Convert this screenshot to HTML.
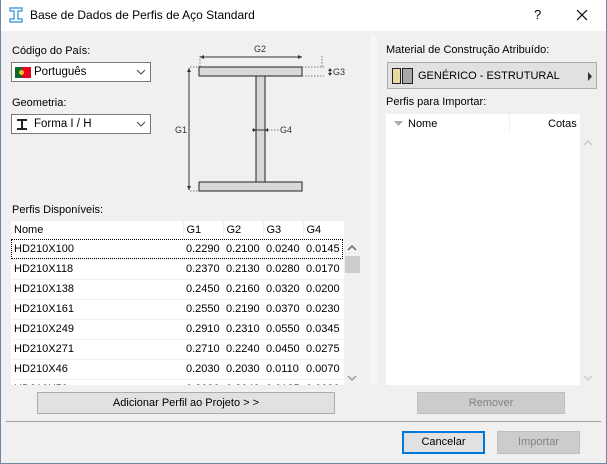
<!DOCTYPE html>
<html><head><meta charset="utf-8"><style>
*{margin:0;padding:0;box-sizing:border-box}
body{width:607px;height:464px;overflow:hidden;background:#f0f0f0;font-family:"Liberation Sans",sans-serif;font-size:11px;color:#000;position:relative}
.a{position:absolute}
.win{position:absolute;left:0;top:0;width:607px;height:464px;border:1px solid #6f86a5;border-top:none}
.dd{position:absolute;background:#fff;border:1px solid #7a7a7a;height:20px}
.btn{position:absolute;background:#e1e1e1;border:1px solid #adadad;text-align:center;font-size:11px}
.dis{background:#cccccc;border-color:#bfbfbf;color:#838383}
table{border-collapse:collapse;font-size:11px}
td{height:20px;padding:0 0 0 3px;white-space:nowrap;border-bottom:1px solid #f0f0f0}
</style></head><body>
<div class="a" style="left:0;top:0;width:607px;height:31px;background:#fff"></div>
<svg class="a" style="left:9px;top:7px" width="14" height="16" viewBox="0 0 14 16"><path d="M1 1h12v3H9v8h4v3H1v-3h4V4H1z" fill="none" stroke="#4aa3df" stroke-width="1.4"/></svg>
<div class="a" style="left:30px;top:8px;font-size:12px">Base de Dados de Perfis de Aço Standard</div>
<div class="a" style="left:534px;top:7px;font-size:13px">?</div>
<svg class="a" style="left:576px;top:9px" width="12" height="12"><path d="M1 1L11 11M11 1L1 11" stroke="#000" stroke-width="1.2"/></svg>

<div class="a" style="left:370px;top:35px;width:7px;height:350px;background:#f6f6f6"></div>

<div class="a" style="left:12px;top:45px">Código do País:</div>
<div class="dd" style="left:11px;top:62px;width:140px">
 <div class="a" style="left:3px;top:4px;width:16px;height:11px;background:#e8001c"><div style="width:7px;height:11px;background:#0a6a2a"></div><div class="a" style="left:4px;top:3px;width:5px;height:5px;border-radius:50%;background:#e9c42a"></div></div>
 <div class="a" style="left:22px;top:3px;font-size:11.5px">Português</div>
 <svg class="a" style="left:124px;top:6px" width="10" height="7"><path d="M1 1l4 4 4-4" fill="none" stroke="#444"/></svg>
</div>
<div class="a" style="left:12px;top:97px">Geometria:</div>
<div class="dd" style="left:11px;top:114px;width:140px">
 <svg class="a" style="left:4px;top:4px" width="12" height="11"><path d="M1 1h10M1 10h10M6 1v9" stroke="#222" stroke-width="2"/></svg>
 <div class="a" style="left:22px;top:3px;font-size:11.5px">Forma I / H</div>
 <svg class="a" style="left:124px;top:6px" width="10" height="7"><path d="M1 1l4 4 4-4" fill="none" stroke="#444"/></svg>
</div>

<svg class="a" style="left:170px;top:44px;overflow:visible" width="190" height="150" font-family="Liberation Sans" font-size="9" fill="#333">
<g transform="translate(10,0)">
<path d="M19 23h103v9H19zM76 32h9v106h-9zM19 138h103v9H19z" fill="#d8d8d8" stroke="#222" stroke-width="1"/>
<path d="M20 12v11M142 12v11M122 23h22M122 32h22M10 23h9M10 147h9M85 86h14" stroke="#777" stroke-dasharray="1.5,1.5" fill="none"/>
<path d="M20 13h102M9 24v122M150 25v6M72 86h13" stroke="#333" fill="none"/>
<path d="M20 13l4-2v4zM122 13l-4-2v4zM9 24l-2 4h4zM9 146l-2-4h4zM150 24l-2 3h4zM150 32l-2-3h4zM76 86l-3-2v4zM85 86l3-2v4z" fill="#333"/>
<text x="74" y="8">G2</text><text x="153" y="31">G3</text><text x="-5" y="89">G1</text><text x="100" y="89">G4</text>
</g>
</svg>

<div class="a" style="left:12px;top:204px">Perfis Disponíveis:</div>
<div class="a" style="left:11px;top:221px;width:333px;height:164px;background:#fff;overflow:hidden">
<table>
<tr><td style="width:172px;border-right:1px solid #f0f0f0;height:18px;border-bottom:none">Nome</td><td style="width:40px;border-right:1px solid #f0f0f0;border-bottom:none;height:18px">G1</td><td style="width:40px;border-right:1px solid #f0f0f0;border-bottom:none;height:18px">G2</td><td style="width:40px;border-right:1px solid #f0f0f0;border-bottom:none;height:18px">G3</td><td style="width:40px;border-bottom:none;height:18px">G4</td></tr>
<tr style="outline:1px dotted #000;outline-offset:-1px"><td>HD210X100</td><td>0.2290</td><td>0.2100</td><td>0.0240</td><td>0.0145</td></tr>
<tr><td>HD210X118</td><td>0.2370</td><td>0.2130</td><td>0.0280</td><td>0.0170</td></tr>
<tr><td>HD210X138</td><td>0.2450</td><td>0.2160</td><td>0.0320</td><td>0.0200</td></tr>
<tr><td>HD210X161</td><td>0.2550</td><td>0.2190</td><td>0.0370</td><td>0.0230</td></tr>
<tr><td>HD210X249</td><td>0.2910</td><td>0.2310</td><td>0.0550</td><td>0.0345</td></tr>
<tr><td>HD210X271</td><td>0.2710</td><td>0.2240</td><td>0.0450</td><td>0.0275</td></tr>
<tr><td>HD210X46</td><td>0.2030</td><td>0.2030</td><td>0.0110</td><td>0.0070</td></tr>
<tr><td>HD210X59</td><td>0.2090</td><td>0.2040</td><td>0.0135</td><td>0.0090</td></tr>
</table></div>
<svg class="a" style="left:346px;top:244px" width="12" height="8"><path d="M2 6l4-4 4 4" fill="none" stroke="#666" stroke-width="1.5"/></svg>
<div class="a" style="left:345px;top:256px;width:15px;height:17px;background:#cdcdcd"></div>
<svg class="a" style="left:346px;top:374px" width="12" height="8"><path d="M2 2l4 4 4-4" fill="none" stroke="#999" stroke-width="1.5"/></svg>
<div class="btn" style="left:37px;top:392px;width:298px;height:22px;line-height:20px">Adicionar Perfil ao Projeto &gt; &gt;</div>

<div class="a" style="left:386px;top:44px">Material de Construção Atribuído:</div>
<div class="a" style="left:387px;top:62px;width:210px;height:27px;background:#e1e1e1;border:1px solid #adadad">
 <div class="a" style="left:4px;top:5px;width:9px;height:16px;background:#e6d9a2;border:1px solid #222"></div>
 <div class="a" style="left:14px;top:5px;width:11px;height:16px;background:#a8a8a8;border:1px solid #222"></div>
 <div class="a" style="left:30px;top:7px">GENÉRICO - ESTRUTURAL</div>
 <svg class="a" style="left:199px;top:9px" width="6" height="9"><path d="M1 0l4 4.5L1 9z" fill="#333"/></svg>
</div>
<div class="a" style="left:386px;top:96px">Perfis para Importar:</div>
<div class="a" style="left:386px;top:114px;width:194px;height:271px;background:#fff"></div>
<div class="a" style="left:509px;top:114px;width:1px;height:18px;background:#f0f0f0"></div>
<svg class="a" style="left:394px;top:121px" width="9" height="5"><path d="M0 0h9L4.5 5z" fill="#aaa"/></svg>
<div class="a" style="left:408px;top:118px">Nome</div>
<div class="a" style="left:548px;top:118px">Cotas</div>
<svg class="a" style="left:582px;top:139px" width="12" height="8"><path d="M2 6l4-4 4 4" fill="none" stroke="#ccc" stroke-width="1.5"/></svg>
<svg class="a" style="left:582px;top:374px" width="12" height="8"><path d="M2 2l4 4 4-4" fill="none" stroke="#ccc" stroke-width="1.5"/></svg>
<div class="btn dis" style="left:417px;top:392px;width:148px;height:22px;line-height:20px">Remover</div>

<div class="a" style="left:6px;top:421px;width:595px;height:1px;background:#a0a0a0"></div>
<div class="btn" style="left:402px;top:431px;width:83px;height:23px;line-height:19px;border:2px solid #0078d7">Cancelar</div>
<div class="btn dis" style="left:497px;top:431px;width:83px;height:23px;line-height:21px">Importar</div>
<div class="win"></div>
</body></html>
